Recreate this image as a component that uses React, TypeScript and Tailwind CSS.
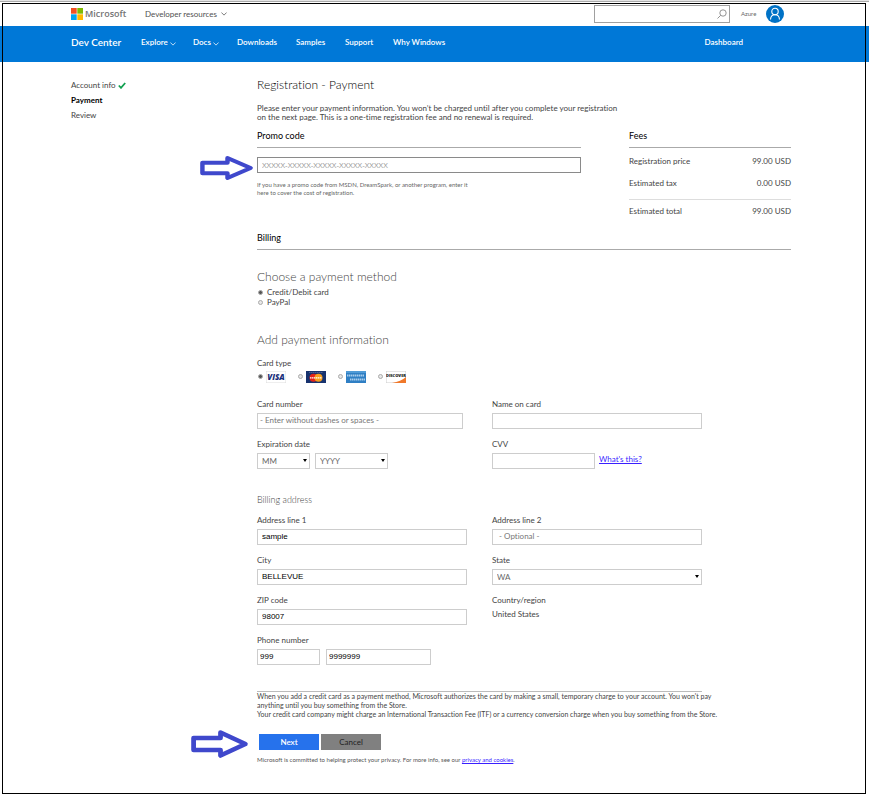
import type { InputHTMLAttributes, ReactNode, SelectHTMLAttributes } from "react";

const fieldBox = "h-4 border border-[#cdcdcd] bg-white outline-none";

function Chevron({ className }: { className: string }) {
  return (
    <svg viewBox="0 0 8 5" className={className} fill="none" stroke="currentColor" strokeWidth="1" aria-hidden="true">
      <path d="M.5 .5l3.500 3.500L7.500 .5" />
    </svg>
  );
}

function Arrow({ className }: { className: string }) {
  return (
    <svg viewBox="0 0 56 30" className={className} fill="none" stroke="#3f48cc" strokeWidth="4.600" preserveAspectRatio="none" aria-hidden="true">
      <path d="M2.500 9h26V3.500l24 11.500-24 11.500V21h-26z" strokeLinejoin="round" />
    </svg>
  );
}

function Radio({ id, name, defaultChecked, label }: { id: string; name: string; defaultChecked?: boolean; label?: string }) {
  return (
    <input
      id={id}
      name={name}
      type="radio"
      defaultChecked={defaultChecked}
      aria-label={label}
      className="size-[5px] shrink-0 appearance-none rounded-full border border-[#aaa] bg-[#e8e8e8] checked:bg-[#555]"
    />
  );
}

function Label({ htmlFor, children }: { htmlFor: string; children: ReactNode }) {
  return (
    <label htmlFor={htmlFor} className="block text-[8px] leading-[10px] text-[#444]">
      {children}
    </label>
  );
}

function TextField({ label, id, width = "w-full", padding = "px-1", ...rest }: { label: string; id: string; width?: string; padding?: string } & InputHTMLAttributes<HTMLInputElement>) {
  return (
    <div className="flex flex-col gap-1">
      <Label htmlFor={id}>{label}</Label>
      <input
        id={id}
        className={`${fieldBox} ${width} ${padding} pb-0.5 font-['Liberation_Sans',sans-serif] text-[8px] text-black placeholder:font-['Lato',sans-serif] placeholder:text-[#777]`}
        {...rest}
      />
    </div>
  );
}

function Select({ width, children, ...rest }: { width: string; children: ReactNode } & SelectHTMLAttributes<HTMLSelectElement>) {
  return (
    <div className={`relative ${width}`}>
      <select className={`${fieldBox} block w-full appearance-none px-1 text-[8px] text-[#666]`} {...rest}>
        {children}
      </select>
      <svg viewBox="0 0 4 3" className="pointer-events-none absolute top-[6px] right-[3px] h-[3px] w-1 fill-black" aria-hidden="true">
        <path d="M0 0h4L2 3z" />
      </svg>
    </div>
  );
}

function SectionHeading({ children }: { children: ReactNode }) {
  return <h2 className="border-b border-[#aaa] pb-[5px] text-[9px] leading-3 text-black">{children}</h2>;
}

function Visa() {
  return (
    <svg viewBox="0 0 20 12" className="h-3 w-5" aria-hidden="true">
      <rect x=".25" y=".25" width="19.500" height="11.500" fill="#fff" stroke="#ddd" strokeWidth=".5" />
      <text x="10" y="9" textAnchor="middle" fontFamily="Open Sans, sans-serif" fontSize="8" fontWeight="800" fontStyle="italic" fill="#1a2f7a">VISA</text>
    </svg>
  );
}

function MasterCard() {
  return (
    <svg viewBox="0 0 20 12" className="h-3 w-5" aria-hidden="true">
      <rect width="20" height="12" fill="#17326e" />
      <path d="M3 1.500h14" stroke="#5c6f9c" strokeWidth=".8" strokeDasharray="1.500 .5" />
      <circle cx="7.500" cy="6.800" r="4" fill="#e2231a" />
      <circle cx="12.500" cy="6.800" r="4" fill="#f79e1b" />
      <path d="M4 6.800h12" stroke="#fff" strokeWidth="1.300" strokeDasharray="1.500 .5" />
    </svg>
  );
}

function Amex() {
  return (
    <svg viewBox="0 0 20 12" className="h-3 w-5" aria-hidden="true">
      <rect width="20" height="12" fill="#2f7fc4" />
      <path d="M0 0h20v2H0z" fill="#4f9ad6" />
      <path d="M1 4.500h17M4 8.500h15" stroke="#a9cdec" strokeWidth="2" strokeDasharray="1.500 .5" />
    </svg>
  );
}

function Discover() {
  return (
    <svg viewBox="0 0 20 12" className="h-3 w-5" aria-hidden="true">
      <rect x=".25" y=".25" width="19.500" height="11.500" fill="#fff" stroke="#ccc" strokeWidth=".5" />
      <path d="M20 6v6H6q9-1.500 14-6z" fill="#f0782a" />
      <text x="10" y="6" textAnchor="middle" fontFamily="Open Sans, sans-serif" fontSize="4" fontWeight="800" fill="#222">DISCOVER</text>
    </svg>
  );
}

const cards = [
  { id: "visa", label: "Visa", Logo: Visa },
  { id: "mastercard", label: "MasterCard", Logo: MasterCard },
  { id: "amex", label: "American Express", Logo: Amex },
  { id: "discover", label: "Discover", Logo: Discover },
];

function Header() {
  return (
    <header>
      <div className="flex h-6 items-center pr-[85px] pl-[71px]">
        <a href="#home" className="flex w-[74px] items-center gap-0.5 font-['Open_Sans',sans-serif] text-[9px] leading-3 font-semibold text-[#737373]">
          <svg viewBox="0 0 12 12" className="size-3" aria-hidden="true">
            <path d="M0 0h5.700v5.700H0z" fill="#f25022" />
            <path d="M6.300 0H12v5.700H6.300z" fill="#7fba00" />
            <path d="M0 6.300h5.700V12H0z" fill="#00a4ef" />
            <path d="M6.300 6.300H12V12H6.300z" fill="#ffb900" />
          </svg>
          Microsoft
        </a>
        <a href="#resources" className="flex items-center gap-1 text-[8px] leading-3 text-[#505050]">
          Developer resources
          <Chevron className="h-1 w-1.5" />
        </a>
        <div className="relative ml-auto w-[136px]">
          <input type="search" aria-label="Search" className="block h-[18px] w-full border border-[#a0a0a0] bg-white px-1 text-[8px] outline-none" />
          <svg viewBox="0 0 10 10" className="absolute top-1 right-[3px] size-[10px]" fill="none" stroke="#888" strokeWidth=".9" aria-hidden="true">
            <circle cx="6" cy="4" r="3.200" />
            <path d="M3.700 6.300L.5 9.500" />
          </svg>
        </div>
        <a href="#azure" className="ml-[11px] w-[25px] text-[6px] leading-3 text-[#666]">Azure</a>
        <button type="button" aria-label="Account" className="size-[18px]">
          <svg viewBox="0 0 18 18" className="size-[18px]" aria-hidden="true">
            <circle cx="9" cy="9" r="9" fill="#0072c6" />
            <g fill="none" stroke="#fff" strokeWidth="1.100">
              <circle cx="9" cy="6.500" r="3.200" />
              <path d="M4.500 14.500q.3-4.700 4.500-4.700t4.500 4.700" />
            </g>
          </svg>
        </button>
      </div>
      <nav className="flex h-9 items-center bg-[#0078d7] pr-[126px] pb-1 pl-[71px] text-[8px] leading-3 font-semibold text-white">
        <a href="#dev" className="w-[70px] text-[10px]">Dev Center</a>
        <a href="#explore" className="flex w-[52px] items-center gap-0.5">Explore<Chevron className="mt-1 h-1 w-1.5" /></a>
        <a href="#docs" className="flex w-11 items-center gap-0.5">Docs<Chevron className="mt-1 h-1 w-1.5" /></a>
        <a href="#downloads" className="w-[59px]">Downloads</a>
        <a href="#samples" className="w-[49px]">Samples</a>
        <a href="#support" className="w-12">Support</a>
        <a href="#why">Why Windows</a>
        <a href="#dashboard" className="ml-auto">Dashboard</a>
      </nav>
    </header>
  );
}

export default function App() {
  return (
    <div className="relative bg-white pb-[30px] font-['Lato','Open_Sans',sans-serif] text-[#444] [font-variant-ligatures:none]">
      <div className="h-0.5 border-b border-[#aaa] bg-[#e5e5e5]" />
      <div className="pointer-events-none absolute top-[3px] right-[3px] bottom-0 left-[2px] z-10 border border-black" />
      <Header />
      <div className="flex pr-[78px] pl-[71px] text-[8px]">
        <aside className="w-[186px] shrink-0 pt-4">
          <ul className="leading-[15px]">
            <li className="flex items-center gap-0.5">
              <a href="#account">Account info</a>
              <svg viewBox="0 0 8 7" className="h-[7px] w-2" fill="none" stroke="#12a150" strokeWidth="1.800" aria-hidden="true">
                <path d="M.8 3.500l2.200 2.300L7.200 1" />
              </svg>
            </li>
            <li className="font-bold text-black"><a href="#payment" aria-current="step">Payment</a></li>
            <li><a href="#review">Review</a></li>
          </ul>
        </aside>
        <main className="min-w-0 flex-1 pt-[15px]">
          <h1 className="text-[12px] leading-4 font-light text-black">Registration - Payment</h1>
          <p className="mt-[11px] leading-[9px]">
            Please enter your payment information. You won’t be charged until after you complete your registration
            <br />
            on the next page. This is a one-time registration fee and no renewal is required.
          </p>

          <div className="mt-2 flex gap-12">
            <section className="flex-1">
              <SectionHeading>Promo code</SectionHeading>
              <div className="relative mt-[9px]">
                <input aria-label="Promo code" placeholder="XXXXX-XXXXX-XXXXX-XXXXX-XXXXX" className="block h-4 w-full border border-[#8a8a8a] px-1 pb-0.5 font-['Open_Sans',sans-serif] text-[8px] outline-none placeholder:text-[#999]" />
                <Arrow className="absolute top-[-2px] left-[-57px] h-[26px] w-[54px]" />
              </div>
              <p className="mt-2 text-[6px] leading-2 text-[#666]">
                If you have a promo code from MSDN, DreamSpark, or another program, enter it
                <br />
                here to cover the cost of registration.
              </p>
            </section>
            <section className="w-[162px]">
              <SectionHeading>Fees</SectionHeading>
              <table className="mt-0.5 w-full">
                <tbody>
                  <tr className="h-[22px]"><th scope="row" className="p-0 text-left font-normal">Registration price</th><td className="p-0 text-right">99.00 USD</td></tr>
                  <tr className="h-[22px]"><th scope="row" className="p-0 text-left font-normal">Estimated tax</th><td className="p-0 text-right">0.00 USD</td></tr>
                </tbody>
                <tfoot>
                  <tr className="h-[5px]"><td colSpan={2} className="border-b border-[#ddd] p-0" /></tr>
                  <tr className="h-[23px]"><th scope="row" className="p-0 text-left font-normal">Estimated total</th><td className="p-0 text-right">99.00 USD</td></tr>
                </tfoot>
              </table>
            </section>
          </div>

          <section className="mt-[10px]">
            <SectionHeading>Billing</SectionHeading>
          </section>

          <form className="w-[445px]" onSubmit={(e) => e.preventDefault()}>
            <h3 className="mt-[19px] text-[12px] leading-4 font-light">Choose a payment method</h3>
            <div className="mt-0.5 flex flex-col pl-px leading-[10px]">
              <div className="flex items-center gap-1"><Radio id="credit" name="method" defaultChecked /><label htmlFor="credit">Credit/Debit card</label></div>
              <div className="flex items-center gap-1"><Radio id="paypal" name="method" /><label htmlFor="paypal">PayPal</label></div>
            </div>

            <h3 className="mt-[25px] text-[12px] leading-4 font-light">Add payment information</h3>
            <fieldset className="mt-[10px]">
              <legend className="leading-[10px]">Card type</legend>
              <div className="mt-[3px] flex gap-[11px] pl-px">
                {cards.map(({ id, label, Logo }, i) => (
                  <div key={id} className="flex w-[29px] gap-[3px]">
                    <div className="flex h-[10px] items-center"><Radio id={id} name="card" label={label} defaultChecked={i === 0} /></div>
                    <label htmlFor={id}><Logo /></label>
                  </div>
                ))}
              </div>
            </fieldset>

            <div className="mt-4 grid grid-cols-2 gap-x-[25px] gap-y-[10px]">
              <TextField id="number" label="Card number" width="w-[206px]" padding="px-0.5" placeholder="- Enter without dashes or spaces -" />
              <TextField id="name" label="Name on card" />
              <div className="flex flex-col gap-1">
                <Label htmlFor="month">Expiration date</Label>
                <div className="flex gap-[5px]">
                  <Select id="month" width="w-[53px]"><option>MM</option></Select>
                  <Select aria-label="Expiration year" width="w-[73px]"><option>YYYY</option></Select>
                </div>
              </div>
              <div className="flex items-end gap-1">
                <TextField id="cvv" label="CVV" width="w-[103px]" />
                <a href="#cvv-help" className="pb-1 leading-3 text-[#3a1fff] underline">What's this?</a>
              </div>
            </div>

            <h4 className="mt-6 text-[9px] leading-[14px] font-light">Billing address</h4>
            <div className="mt-2 grid grid-cols-2 gap-x-[25px] gap-y-[10px]">
              <TextField id="line1" label="Address line 1" defaultValue="sample" />
              <TextField id="line2" label="Address line 2" placeholder=" - Optional -" />
              <TextField id="city" label="City" defaultValue="BELLEVUE" />
              <div className="flex flex-col gap-1">
                <Label htmlFor="state">State</Label>
                <Select id="state" width="w-full"><option>WA</option></Select>
              </div>
              <TextField id="zip" label="ZIP code" defaultValue="98007" />
              <dl className="flex flex-col gap-1 leading-[10px]"><dt>Country/region</dt><dd>United States</dd></dl>
              <div className="flex items-end gap-1.5">
                <TextField id="area" label="Phone number" width="w-[63px]" padding="px-0.5" defaultValue="999" />
                <input aria-label="Phone number, local part" defaultValue="9999999" className={`${fieldBox} w-[105px] px-0.5 pb-0.5 font-['Liberation_Sans',sans-serif] text-[8px] text-black`} />
              </div>
            </div>

            <p className="mt-[26px] border-t border-[#bbb] text-[7px] leading-[9px] whitespace-nowrap">
              When you add a credit card as a payment method, Microsoft authorizes the card by making a small, temporary charge to your account. You won't pay
              <br />
              anything until you buy something from the Store.
              <br />
              Your credit card company might charge an International Transaction Fee (ITF) or a currency conversion charge when you buy something from the Store.
            </p>

            <div className="relative mt-[15px] flex gap-0.5 pl-0.5">
              <Arrow className="absolute top-[-5px] left-[-66px] h-[30px] w-[58px]" />
              <button type="submit" className="h-4 w-[60px] bg-[#2672ec] text-[8px] font-semibold text-white">Next</button>
              <button type="button" className="h-4 w-[60px] bg-[#808080] text-[8px] text-[#222]">Cancel</button>
            </div>
            <p className="mt-1.5 text-[6px] leading-2 text-[#555]">
              Microsoft is committed to helping protect your privacy. For more info, see our <a href="#privacy" className="text-[#3a1fff] underline">privacy and cookies</a>.
            </p>
          </form>
        </main>
      </div>
    </div>
  );
}
